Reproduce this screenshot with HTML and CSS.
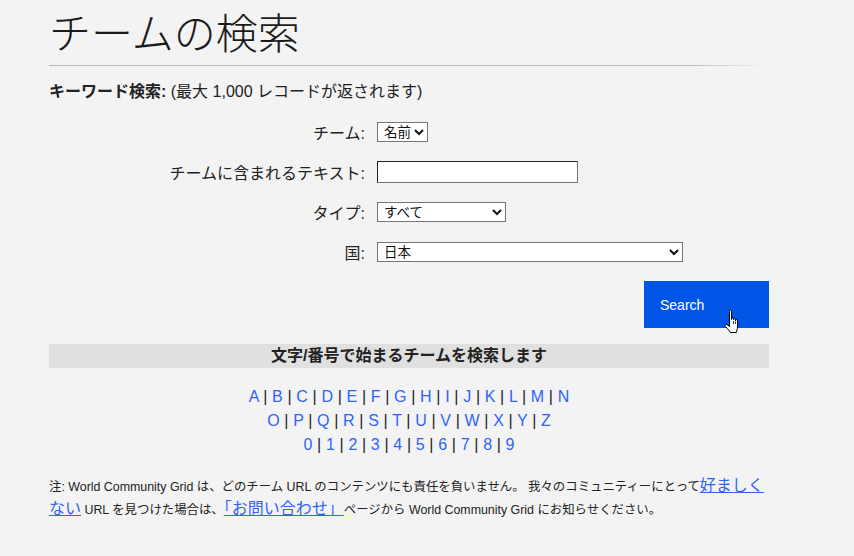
FILE: index.html
```html
<!DOCTYPE html>
<html lang="ja">
<head>
<meta charset="utf-8">
<title>チームの検索</title>
<link rel="stylesheet" href="styles.css">
</head>
<body>
<div class="page">
  <h1 class="title">チームの検索</h1>
  <div class="rule"></div>
  <p class="keyword"><b>キーワード検索:</b> (最大 1,000 レコードが返されます)</p>
  <form class="search-form">
    <div class="form-grid">
      <label class="label">チーム:</label>
      <div class="field"><select class="sel sel-name"><option>名前</option><option>ID</option></select></div>
      <label class="label">チームに含まれるテキスト:</label>
      <div class="field"><input class="text-input" type="text"></div>
      <label class="label">タイプ:</label>
      <div class="field"><select class="sel sel-type"><option>すべて</option><option>企業</option><option>教育機関</option><option>非営利団体</option></select></div>
      <label class="label">国:</label>
      <div class="field"><select class="sel sel-country"><option>日本</option></select></div>
    </div>
    <div class="actions">
      <button class="search-btn" type="button">Search</button>
      <svg class="cursor" width="18" height="26" viewBox="0 0 18 26" aria-hidden="true">
        <path d="M5.5 1.5C5.5 0.3 7.5 0.3 7.5 1.5L7.5 9.5L7.5 8.8C7.5 7.6 9.5 7.6 9.5 8.8L9.5 10L9.5 9.6C9.5 8.4 11.5 8.4 11.5 9.6L11.5 11L11.5 10.6C11.5 9.4 13.5 9.4 13.5 10.6L13.5 17C13.5 19.5 12.5 20.5 12.3 22.5L6.3 22.5C5.5 20.5 3.5 18.8 1.5 16.5C0.4 15.2 1.6 13.6 3 14.6L5.5 16.5Z" fill="#fff" stroke="#000" stroke-width="1" stroke-linejoin="round"/>
        <path d="M9.5 11V14M11.5 11.5V14" stroke="#000" stroke-width="0.8"/>
      </svg>
    </div>
  </form>
  <div class="bar">文字/番号で始まるチームを検索します</div>
  <div class="alpha">
    <div class="alpha-row"><a href="#">A</a> | <a href="#">B</a> | <a href="#">C</a> | <a href="#">D</a> | <a href="#">E</a> | <a href="#">F</a> | <a href="#">G</a> | <a href="#">H</a> | <a href="#">I</a> | <a href="#">J</a> | <a href="#">K</a> | <a href="#">L</a> | <a href="#">M</a> | <a href="#">N</a></div>
    <div class="alpha-row"><a href="#">O</a> | <a href="#">P</a> | <a href="#">Q</a> | <a href="#">R</a> | <a href="#">S</a> | <a href="#">T</a> | <a href="#">U</a> | <a href="#">V</a> | <a href="#">W</a> | <a href="#">X</a> | <a href="#">Y</a> | <a href="#">Z</a></div>
    <div class="alpha-row"><a href="#">0</a> | <a href="#">1</a> | <a href="#">2</a> | <a href="#">3</a> | <a href="#">4</a> | <a href="#">5</a> | <a href="#">6</a> | <a href="#">7</a> | <a href="#">8</a> | <a href="#">9</a></div>
  </div>
  <p class="note">注: World Community Grid は、どのチーム URL のコンテンツにも責任を負いません。 我々のコミュニティーにとって<a class="note-link" href="#">好ましくない</a> URL を見つけた場合は、<a class="note-link" href="#">「お問い合わせ」</a>ページから World Community Grid にお知らせください。</p>
</div>
</body>
</html>
```

FILE: styles.css
```css
html, body {
  margin: 0;
  padding: 0;
  background: #f3f3f3;
}
body {
  font-family: "Liberation Sans", "Noto Sans CJK JP", sans-serif;
  color: #222;
  font-size: 16px;
}
.page {
  width: 720px;
  margin-left: 49px;
}
.title {
  margin: 0;
  padding-top: 3px;
  height: 58px;
  line-height: 56px;
  font-family: "Noto Sans CJK JP", sans-serif;
  font-weight: 300;
  font-size: 42px;
  color: #1a1a1a;
}
.rule {
  height: 1px;
  margin-top: 4px;
  background: linear-gradient(to right, #b8b8b8 0, #b8b8b8 88%, rgba(184,184,184,0) 100%);
}
.keyword {
  margin: 6px 0 0;
  line-height: 40px;
  font-size: 16px;
}
.keyword b {
  font-weight: bold;
}
.search-form {
  margin: 0;
}
.form-grid {
  display: grid;
  grid-template-columns: 316px 1fr;
  column-gap: 12px;
  grid-auto-rows: 40px;
  align-items: center;
}
.label {
  text-align: right;
  font-size: 16px;
  color: #222;
}
.field {
  display: flex;
  align-items: center;
}
.sel {
  font-family: "Liberation Sans", "Noto Sans CJK JP", sans-serif;
  font-size: 13.5px;
  height: 20px;
  border: 1px solid #767676;
  border-radius: 0;
  background: #fff;
  color: #111;
  padding: 0 0 0 2px;
}
.sel-name { width: 51px; }
.sel-type { width: 129px; }
.sel-country { width: 306px; }
.text-input {
  width: 201px;
  height: 22px;
  box-sizing: border-box;
  border: 1px solid #767676;
  border-top-color: #222;
  border-left-color: #222;
  background: #fff;
  padding: 0 3px;
  font-size: 13px;
}
.actions {
  display: flex;
  justify-content: flex-end;
  margin-top: 9px;
  position: relative;
}
.search-btn {
  width: 125px;
  height: 47px;
  background: #0055e6;
  color: #fff;
  border: 0;
  border-radius: 0;
  font-family: "Liberation Sans", sans-serif;
  font-size: 14px;
  text-align: left;
  padding: 0 0 0 16px;
}
.cursor {
  position: absolute;
  left: 675px;
  top: 29px;
}
.bar {
  margin-top: 16px;
  height: 24px;
  line-height: 24px;
  background: #e0e0e0;
  text-align: center;
  font-weight: bold;
  font-size: 16px;
  color: #222;
}
.alpha {
  margin-top: 17px;
  text-align: center;
  font-size: 16px;
  line-height: 24px;
  word-spacing: 0.25px;
  color: #222;
}
.alpha a {
  color: #2f64f6;
  text-decoration: none;
}
.note {
  margin: 19px 0 0;
  font-size: 12.4px;
  line-height: 23px;
  color: #222;
}
.note-link {
  font-size: 16px;
  line-height: 16px;
  color: #2f64f6;
  text-decoration: underline;
}
```
